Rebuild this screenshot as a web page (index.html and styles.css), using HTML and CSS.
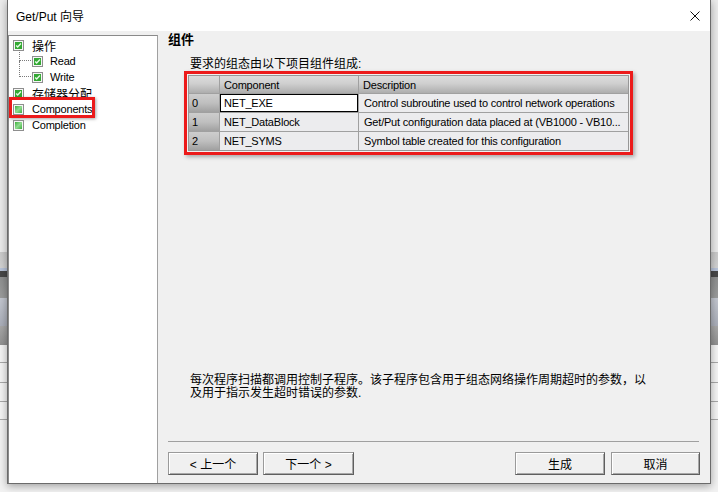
FILE: index.html
```html
<!DOCTYPE html>
<html lang="zh">
<head>
<meta charset="utf-8">
<title>Get/Put 向导</title>
<link rel="stylesheet" href="styles.css">
</head>
<body>
<svg class="defs" width="0" height="0" aria-hidden="true">
  <defs>
    <linearGradient id="ug" x1="0" y1="0" x2="1" y2="1">
      <stop offset="0" stop-color="#3fae3f"/>
      <stop offset="0.5" stop-color="#8fdc8f"/>
      <stop offset="1" stop-color="#3fae3f"/>
    </linearGradient>
    <symbol id="chk" viewBox="0 0 11 11">
      <rect x="0.5" y="0.5" width="10" height="10" fill="#f6f6f6" stroke="#8e8e8e"/>
      <rect x="2" y="2" width="7" height="7" fill="#34a834"/>
      <path d="M3.2 5.4 L4.7 7 L7.9 3.6" stroke="#e6fbe6" stroke-width="1.4" fill="none"/>
    </symbol>
    <symbol id="unchk" viewBox="0 0 11 11">
      <rect x="0.5" y="0.5" width="10" height="10" fill="#f6f6f6" stroke="#8e8e8e"/>
      <rect x="2" y="2" width="7" height="7" fill="url(#ug)"/>
    </symbol>
  </defs>
</svg>
<div class="dialog">
  <div class="titlebar">
    <span class="title">Get/Put 向导</span>
    <svg class="close" width="10" height="10" viewBox="0 0 10 10"><path d="M0.5 0.5 L9.5 9.5 M9.5 0.5 L0.5 9.5" stroke="#111" stroke-width="1" fill="none"/></svg>
  </div>
  <div class="main">
    <div class="tree">
      <div class="node lvl0"><svg width="11" height="11"><use href="#chk"/></svg><span class="cjk">操作</span></div>
      <div class="node lvl1 r1"><svg width="11" height="11"><use href="#chk"/></svg><span>Read</span></div>
      <div class="node lvl1 r2"><svg width="11" height="11"><use href="#chk"/></svg><span>Write</span></div>
      <div class="node lvl0"><svg width="11" height="11"><use href="#chk"/></svg><span class="cjk">存储器分配</span></div>
      <div class="node lvl0"><svg width="11" height="11"><use href="#unchk"/></svg><span>Components</span><div class="mark"></div></div>
      <div class="node lvl0"><svg width="11" height="11"><use href="#unchk"/></svg><span>Completion</span></div>
    </div>
    <div class="content">
      <div class="heading">组件</div>
      <div class="subtitle">要求的组态由以下项目组件组成:</div>
      <div class="highlight">
        <div class="grid">
          <div class="hdr"></div>
          <div class="hdr">Component</div>
          <div class="hdr">Description</div>
          <div class="idx">0</div>
          <div class="cell focus">NET_EXE</div>
          <div class="cell">Control subroutine used to control network operations</div>
          <div class="idx">1</div>
          <div class="cell">NET_DataBlock</div>
          <div class="cell">Get/Put configuration data placed at (VB1000 - VB10...</div>
          <div class="idx">2</div>
          <div class="cell">NET_SYMS</div>
          <div class="cell">Symbol table created for this configuration</div>
        </div>
      </div>
      <div class="spacer"></div>
      <div class="desc">每次程序扫描都调用控制子程序。该子程序包含用于组态网络操作周期超时的参数，以<br>及用于指示发生超时错误的参数.</div>
      <div class="sep"></div>
      <div class="buttons">
        <button class="btn w90">&lt; 上一个</button>
        <button class="btn w91">下一个 &gt;</button>
        <span class="fill"></span>
        <button class="btn w90 gen">生成</button>
        <button class="btn w89">取消</button>
      </div>
    </div>
  </div>
</div>
</body>
</html>
```
FILE: styles.css
```css
html, body {
  margin: 0;
  padding: 0;
}
body {
  width: 718px;
  height: 492px;
  overflow: hidden;
  font-family: "Liberation Sans", "Noto Sans CJK SC", sans-serif;
  color: #000;
  background: linear-gradient(to bottom,
    #ebebeb 0, #ebebeb 252px,
    #c9c9c9 252px, #d2d2d2 268px,
    #b7c3d9 268px, #b7c3d9 271px,
    #474747 271px, #474747 277px,
    #8e8f8f 277px, #9b9c9c 298px,
    #c3c7d0 298px, #a9adb8 326px,
    #a8a8a8 326px, #909090 345px,
    #f4f4f4 345px, #f4f4f4 362px,
    #a8a8a8 362px, #a8a8a8 363px,
    #f4f4f4 363px, #f4f4f4 382px,
    #a8a8a8 382px, #a8a8a8 383px,
    #f4f4f4 383px, #f4f4f4 401px,
    #a8a8a8 401px, #a8a8a8 402px,
    #f4f4f4 402px, #f4f4f4 419px,
    #a8a8a8 419px, #a8a8a8 420px,
    #f2f2f2 420px);
}
.defs {
  position: absolute;
  width: 0;
  height: 0;
}
.dialog {
  margin-left: 7px;
  width: 704px;
  height: 484px;
  box-sizing: border-box;
  border: 1px solid #6b6b6b;
  border-top: none;
  background: #f0f0f0;
  display: flex;
  flex-direction: column;
  box-shadow: 0 2px 8px rgba(0, 0, 0, 0.35);
}
.titlebar {
  height: 31px;
  flex: none;
  background: #fff;
  display: flex;
  align-items: center;
  padding: 0 10px 0 8px;
  font-size: 12px;
}
.title {
  flex: 1;
}
.close {
  flex: none;
}
.main {
  flex: 1;
  display: flex;
  min-height: 0;
}
.tree {
  width: 150px;
  flex: none;
  box-sizing: border-box;
  margin-top: 4px;
  border: 1px solid #8a8a8a;
  border-bottom: none;
  border-right-color: #a0a0a0;
  background: #fff;
  padding-top: 1px;
  font-size: 11px;
  letter-spacing: -0.2px;
}
.node {
  position: relative;
  height: 16px;
  display: flex;
  align-items: center;
  white-space: nowrap;
}
.node svg {
  flex: none;
  margin-right: 8px;
}
.lvl0 {
  padding-left: 4px;
}
.lvl1 {
  padding-left: 23px;
}
.lvl1 svg {
  margin-right: 7px;
}
.cjk {
  font-size: 12px;
  letter-spacing: 0;
}
.lvl1::before {
  content: "";
  position: absolute;
  left: 10px;
  width: 11px;
  border-left: 1px dotted #7a7a7a;
  border-bottom: 1px dotted #7a7a7a;
}
.r1::before {
  top: -3px;
  height: 10px;
}
.r2::before {
  top: -8px;
  height: 15px;
}
.mark {
  position: absolute;
  left: 0;
  top: -4px;
  width: 86px;
  height: 21px;
  box-sizing: border-box;
  border: 3px solid #ec1a1a;
  box-shadow: 1px 1px 3px rgba(0, 0, 0, 0.35);
  pointer-events: none;
}
.content {
  flex: 1;
  min-width: 0;
  display: flex;
  flex-direction: column;
  padding: 1px 10px 8px 10px;
}
.heading {
  font-size: 13px;
  font-weight: bold;
  line-height: 16px;
  height: 16px;
}
.subtitle {
  margin-top: 9px;
  padding-left: 22px;
  font-size: 12px;
  line-height: 14px;
  height: 14px;
}
.highlight {
  margin-left: 16px;
  width: 449px;
  box-sizing: border-box;
  border: 3px solid #ec1a1a;
  padding: 1px;
  box-shadow: 2px 2px 4px rgba(0, 0, 0, 0.3);
}
.grid {
  display: grid;
  grid-template-columns: 30px 138px 1fr;
  grid-template-rows: 17px 18px 18px 18px;
  gap: 1px;
  background: #a0a0a0;
  border: 1px solid #979797;
  font-size: 11px;
  letter-spacing: -0.2px;
}
.grid > div {
  display: flex;
  align-items: center;
  white-space: nowrap;
  overflow: hidden;
}
.hdr {
  background: linear-gradient(to bottom, #dcdcdc 0, #cfcfcf 45%, #adadad 100%);
  padding-left: 4px;
}
.idx {
  background: linear-gradient(to bottom, #cdcdcd 0, #bfbfbf 50%, #a0a0a0 100%);
  padding-left: 3px;
}
.cell {
  background: #ececee;
  padding-left: 4px;
}
.cell + .cell {
  padding-left: 5px;
}
.focus {
  background: #fff;
  box-shadow: inset 0 0 0 1px #000;
}
.spacer {
  flex: 1;
}
.desc {
  padding-left: 22px;
  font-size: 12px;
  line-height: 13px;
  white-space: nowrap;
  margin-bottom: 41px;
}
.sep {
  height: 1px;
  flex: none;
  background: #a0a0a0;
  margin-right: 1px;
}
.buttons {
  display: flex;
  gap: 5px;
  margin-top: 10px;
  height: 23px;
  flex: none;
}
.fill {
  flex: 1;
}
.btn {
  height: 23px;
  padding: 0;
  font: 12px "Liberation Sans", "Noto Sans CJK SC", sans-serif;
  color: #000;
  background: #f0f0f0;
  border: 1px solid;
  border-color: #9a9a9a #5f5f5f #5f5f5f #9a9a9a;
  box-shadow: inset 1px 1px 0 #ffffff, inset -1px -1px 0 #a8a8a8;
}
.w90 {
  width: 90px;
}
.w91 {
  width: 91px;
}
.w89 {
  width: 89px;
}
.gen {
  margin-right: 1px;
}
```
